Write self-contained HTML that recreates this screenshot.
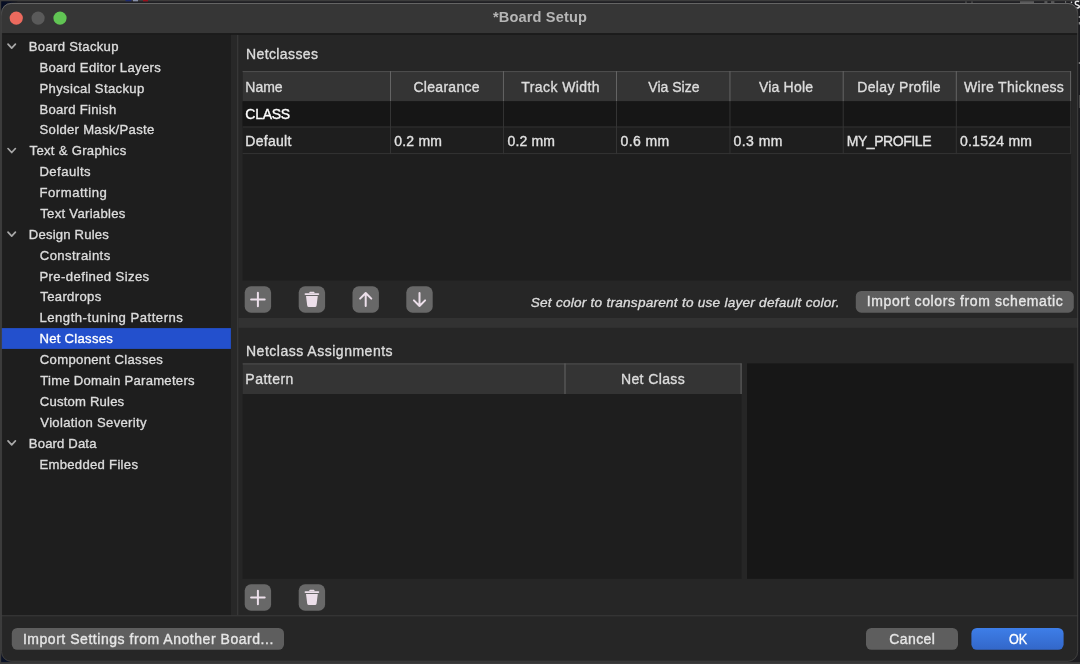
<!DOCTYPE html>
<html><head><meta charset="utf-8">
<title>Board Setup</title>
<style>
html,body{margin:0;padding:0;}
body{width:1080px;height:664px;overflow:hidden;background:#3c3c3c;position:relative;font-family:"Liberation Sans",sans-serif;font-size:14px;color:#dedede;}
.abs{position:absolute;}
#txt{left:0;top:0;width:1080px;height:664px;will-change:transform;}
.t{position:absolute;white-space:nowrap;line-height:20px;height:20px;-webkit-text-stroke:0.35px currentColor;}
</style></head><body>
<svg class="abs" style="left:0;top:0" width="1080" height="664" viewBox="0 0 1080 664">
<defs>
<clipPath id="wc"><rect x="1.1" y="3.0" width="1077.0" height="658.7" rx="10" ry="10"/></clipPath>
<linearGradient id="okg" x1="0" y1="0" x2="0" y2="1"><stop offset="0" stop-color="#3e7ee8"/><stop offset="1" stop-color="#3367c9"/></linearGradient>
<linearGradient id="bdg" gradientUnits="userSpaceOnUse" x1="0" y1="3" x2="0" y2="16"><stop offset="0" stop-color="#6e6e6e"/><stop offset="0.25" stop-color="#686868"/><stop offset="1" stop-color="#404040"/></linearGradient>
<linearGradient id="nv" x1="0" y1="0" x2="1" y2="0"><stop offset="0" stop-color="#050d24"/><stop offset="0.5" stop-color="#0a1024"/><stop offset="1" stop-color="#1c1c20"/></linearGradient>
</defs>
<rect x="0" y="0" width="1080" height="664" fill="#3c3c3c"/>
<rect x="1.3" y="1.4" width="1079" height="660.8" fill="#1c1c20"/>
<rect x="1.3" y="1.4" width="16" height="30" fill="url(#nv)"/>
<rect x="1.3" y="640" width="12" height="22" fill="#0a1228"/>
<rect x="125.5" y="0" width="6" height="1.3" fill="#1c2a70"/><rect x="133" y="0" width="5" height="1.3" fill="#8890a8"/><rect x="143" y="0" width="5" height="1.4" fill="#98101c"/>
<rect x="1020" y="1.4" width="14" height="1.4" fill="#6a6a6a"/>
<rect x="1044.4" y="1.4" width="3" height="1.3" fill="#707070"/>
<rect x="1051" y="1.4" width="3.4" height="1.3" fill="#707070"/>
<rect x="1065.2" y="1.2" width="0.9" height="1.6" fill="#8a8a8a"/>
<rect x="965" y="1.6" width="2" height="1" fill="#555"/><rect x="971" y="1.6" width="2" height="1" fill="#555"/>
<circle cx="1071.5" cy="2.3" r="0.8" fill="#ddd"/>
<path d="M1079.2 1.6 Q1075.2 0.6 1075.2 3 Q1075.2 4.6 1077.4 5 Q1079.6 5.5 1079.2 7.2 Q1078.6 8.4 1076.2 7.8" fill="none" stroke="#e8e8e8" stroke-width="1.5"/>
<rect x="1078.7" y="16" width="1.3" height="2" fill="#8a8a8a"/><rect x="1078.7" y="22" width="1.3" height="2.5" fill="#8a8a8a"/>
<rect x="1078.7" y="62" width="1.3" height="2" fill="#777"/><rect x="1078.9" y="95" width="1.1" height="13" fill="#4a4a4a"/>
<rect x="1.1" y="3.0" width="1077.0" height="658.7" rx="10" ry="10" fill="#262626"/>
<g clip-path="url(#wc)">
<rect x="0.00" y="0.00" width="1080.00" height="33.20" fill="#363636" />
<rect x="0.00" y="33.20" width="1080.00" height="1.70" fill="#1b1b1b" />
<circle cx="16.25" cy="18.1" r="6.6" fill="#ec6a5e"/>
<circle cx="38.1" cy="18.1" r="6.6" fill="#5a5a5a"/>
<circle cx="60.0" cy="18.1" r="6.6" fill="#61c454"/>
<rect x="0.00" y="34.90" width="230.90" height="580.40" fill="#1e1e1e" />
<rect x="230.90" y="34.90" width="6.20" height="580.40" fill="#282828" />
<rect x="237.10" y="34.90" width="1.20" height="580.40" fill="#3a3a3a" />
<rect x="0.00" y="328.10" width="230.90" height="20.80" fill="#2350cd" />
<path d="M8.0 44.10 L11.7 48.10 L15.4 44.10" fill="none" stroke="#a8a8a8" stroke-width="1.7" stroke-linecap="round" stroke-linejoin="round"/>
<path d="M8.0 148.53 L11.7 152.53 L15.4 148.53" fill="none" stroke="#a8a8a8" stroke-width="1.7" stroke-linecap="round" stroke-linejoin="round"/>
<path d="M8.0 232.06 L11.7 236.06 L15.4 232.06" fill="none" stroke="#a8a8a8" stroke-width="1.7" stroke-linecap="round" stroke-linejoin="round"/>
<path d="M8.0 440.92 L11.7 444.92 L15.4 440.92" fill="none" stroke="#a8a8a8" stroke-width="1.7" stroke-linecap="round" stroke-linejoin="round"/>
<rect x="242.60" y="71.10" width="828.50" height="209.50" fill="#1e1e1e" />
<rect x="242.60" y="71.10" width="828.50" height="30.20" fill="#343434" />
<rect x="242.60" y="71.10" width="828.50" height="1.00" fill="#505050" />
<rect x="242.60" y="101.30" width="828.50" height="26.20" fill="#161616" />
<rect x="242.60" y="126.50" width="828.50" height="1.00" fill="#343434" />
<rect x="242.60" y="153.10" width="828.50" height="1.00" fill="#343434" />
<rect x="390.00" y="71.10" width="1.00" height="30.20" fill="#646464" />
<rect x="390.00" y="101.30" width="1.00" height="52.80" fill="#343434" />
<rect x="502.95" y="71.10" width="1.00" height="30.20" fill="#646464" />
<rect x="502.95" y="101.30" width="1.00" height="52.80" fill="#343434" />
<rect x="616.00" y="71.10" width="1.00" height="30.20" fill="#646464" />
<rect x="616.00" y="101.30" width="1.00" height="52.80" fill="#343434" />
<rect x="729.45" y="71.10" width="1.00" height="30.20" fill="#646464" />
<rect x="729.45" y="101.30" width="1.00" height="52.80" fill="#343434" />
<rect x="842.70" y="71.10" width="1.00" height="30.20" fill="#646464" />
<rect x="842.70" y="101.30" width="1.00" height="52.80" fill="#343434" />
<rect x="955.80" y="71.10" width="1.00" height="30.20" fill="#646464" />
<rect x="955.80" y="101.30" width="1.00" height="52.80" fill="#343434" />
<rect x="1070.10" y="71.10" width="1.00" height="30.20" fill="#646464" />
<rect x="1070.10" y="101.30" width="1.00" height="52.80" fill="#343434" />
<rect x="244.70" y="286.30" width="26.40" height="26.40" fill="#686868" rx="6.3" ry="6.3" />
<rect x="298.70" y="286.30" width="26.40" height="26.40" fill="#686868" rx="6.3" ry="6.3" />
<rect x="352.50" y="286.30" width="26.40" height="26.40" fill="#686868" rx="6.3" ry="6.3" />
<rect x="406.30" y="286.30" width="26.40" height="26.40" fill="#686868" rx="6.3" ry="6.3" />
<path d="M251.09999999999997 299.5H264.7M257.9 292.7V306.3" stroke="#ecdfea" stroke-width="2" stroke-linecap="round" fill="none"/>
<path d="M305.5 294.1H318.29999999999995" stroke="#ecdfea" stroke-width="1.9" stroke-linecap="round" fill="none"/><path d="M309.29999999999995 293.3V292.5Q309.29999999999995 291.7 310.09999999999997 291.7H313.7Q314.5 291.7 314.5 292.5V293.3Z" fill="#ecdfea"/><path d="M306.0 296.1H317.79999999999995L316.59999999999997 305.4Q316.45 307.0 314.9 307.0H308.9Q307.34999999999997 307.0 307.2 305.4Z" fill="#ecdfea"/>
<path d="M365.7 306.1V293.1M360.09999999999997 298.6L365.7 293.0L371.3 298.6" stroke="#ecdfea" stroke-width="2" stroke-linecap="round" stroke-linejoin="round" fill="none"/>
<path d="M419.5 292.9V305.9M413.9 300.4L419.5 306.0L425.1 300.4" stroke="#ecdfea" stroke-width="2" stroke-linecap="round" stroke-linejoin="round" fill="none"/>
<rect x="855.80" y="291.00" width="218.00" height="21.70" fill="#5e5e5e" rx="5.5" ry="5.5" />
<rect x="238.30" y="318.00" width="841.70" height="9.80" fill="#323232" />
<rect x="242.60" y="363.40" width="499.00" height="215.40" fill="#1e1e1e" />
<rect x="242.60" y="363.40" width="499.00" height="30.60" fill="#343434" />
<rect x="242.60" y="363.40" width="499.00" height="1.00" fill="#505050" />
<rect x="564.50" y="363.40" width="1.00" height="30.60" fill="#646464" />
<rect x="740.60" y="363.40" width="1.00" height="30.60" fill="#646464" />
<rect x="747.00" y="363.40" width="326.60" height="215.40" fill="#171717" />
<rect x="244.70" y="584.30" width="26.40" height="26.40" fill="#686868" rx="6.3" ry="6.3" />
<rect x="298.70" y="584.30" width="26.40" height="26.40" fill="#686868" rx="6.3" ry="6.3" />
<path d="M251.09999999999997 597.5H264.7M257.9 590.7V604.3" stroke="#ecdfea" stroke-width="2" stroke-linecap="round" fill="none"/>
<path d="M305.5 592.1H318.29999999999995" stroke="#ecdfea" stroke-width="1.9" stroke-linecap="round" fill="none"/><path d="M309.29999999999995 591.3V590.5Q309.29999999999995 589.7 310.09999999999997 589.7H313.7Q314.5 589.7 314.5 590.5V591.3Z" fill="#ecdfea"/><path d="M306.0 594.1H317.79999999999995L316.59999999999997 603.4Q316.45 605.0 314.9 605.0H308.9Q307.34999999999997 605.0 307.2 603.4Z" fill="#ecdfea"/>
<rect x="0.00" y="615.30" width="1080.00" height="1.00" fill="#3b3b3b" />
<rect x="11.80" y="628.00" width="272.20" height="21.80" fill="#5e5e5e" rx="5.5" ry="5.5" />
<rect x="866.00" y="628.00" width="92.00" height="21.80" fill="#5e5e5e" rx="5.5" ry="5.5" />
<rect x="971.40" y="628.00" width="92.20" height="21.80" fill="url(#okg)" rx="5.5" ry="5.5" />
</g>
<rect x="1.55" y="3.45" width="1076.1" height="657.8000000000001" rx="9.6" ry="9.6" fill="none" stroke="url(#bdg)" stroke-width="0.9"/>
</svg>
<div class="abs" id="txt">
<span class="t" id="s0" style="left:28.81px;top:37.00px;font-size:13.1px;letter-spacing:0.317px;color:#dcdcdc;">Board Stackup</span>
<span class="t" id="s1" style="left:39.45px;top:58.00px;font-size:13.1px;letter-spacing:0.308px;color:#dcdcdc;">Board Editor Layers</span>
<span class="t" id="s2" style="left:39.45px;top:79.00px;font-size:13.1px;letter-spacing:0.337px;color:#dcdcdc;">Physical Stackup</span>
<span class="t" id="s3" style="left:39.45px;top:100.00px;font-size:13.1px;letter-spacing:0.295px;color:#dcdcdc;">Board Finish</span>
<span class="t" id="s4" style="left:39.59px;top:120.00px;font-size:13.1px;letter-spacing:0.296px;color:#dcdcdc;">Solder Mask/Paste</span>
<span class="t" id="s5" style="left:29.60px;top:141.00px;font-size:13.1px;letter-spacing:0.301px;color:#dcdcdc;">Text &amp; Graphics</span>
<span class="t" id="s6" style="left:39.45px;top:162.00px;font-size:13.1px;letter-spacing:0.456px;color:#dcdcdc;">Defaults</span>
<span class="t" id="s7" style="left:39.45px;top:183.00px;font-size:13.1px;letter-spacing:0.535px;color:#dcdcdc;">Formatting</span>
<span class="t" id="s8" style="left:40.27px;top:204.00px;font-size:13.1px;letter-spacing:0.289px;color:#dcdcdc;">Text Variables</span>
<span class="t" id="s9" style="left:28.81px;top:225.00px;font-size:13.1px;letter-spacing:0.198px;color:#dcdcdc;">Design Rules</span>
<span class="t" id="s10" style="left:39.81px;top:246.00px;font-size:13.1px;letter-spacing:0.420px;color:#dcdcdc;">Constraints</span>
<span class="t" id="s11" style="left:39.45px;top:267.00px;font-size:13.1px;letter-spacing:0.399px;color:#dcdcdc;">Pre-defined Sizes</span>
<span class="t" id="s12" style="left:40.27px;top:287.00px;font-size:13.1px;letter-spacing:0.336px;color:#dcdcdc;">Teardrops</span>
<span class="t" id="s13" style="left:39.45px;top:308.00px;font-size:13.1px;letter-spacing:0.522px;color:#dcdcdc;">Length-tuning Patterns</span>
<span class="t" id="s14" style="left:39.45px;top:329.00px;font-size:13.1px;letter-spacing:0.279px;color:#fff;">Net Classes</span>
<span class="t" id="s15" style="left:39.81px;top:350.00px;font-size:13.1px;letter-spacing:0.326px;color:#dcdcdc;">Component Classes</span>
<span class="t" id="s16" style="left:40.27px;top:371.00px;font-size:13.1px;letter-spacing:0.267px;color:#dcdcdc;">Time Domain Parameters</span>
<span class="t" id="s17" style="left:39.81px;top:392.00px;font-size:13.1px;letter-spacing:0.195px;color:#dcdcdc;">Custom Rules</span>
<span class="t" id="s18" style="left:40.36px;top:413.00px;font-size:13.1px;letter-spacing:0.303px;color:#dcdcdc;">Violation Severity</span>
<span class="t" id="s19" style="left:28.81px;top:434.00px;font-size:13.1px;letter-spacing:0.157px;color:#dcdcdc;">Board Data</span>
<span class="t" id="s20" style="left:39.45px;top:455.00px;font-size:13.1px;letter-spacing:0.298px;color:#dcdcdc;">Embedded Files</span>
<span class="t" id="title" style="left:492.94px;top:7.00px;font-size:14.6px;letter-spacing:0.139px;font-weight:bold;color:#b6b6b6;-webkit-text-stroke:0;">*Board Setup</span>
<span class="t" id="l1" style="left:246.01px;top:44.00px;font-size:14px;letter-spacing:0.389px;color:#dcdcdc;">Netclasses</span>
<span class="t" id="h0" style="left:245.32px;top:77.00px;font-size:14px;letter-spacing:-0.024px;color:#dcdcdc;">Name</span>
<span class="t" id="h1" style="left:413.41px;top:77.00px;font-size:14px;letter-spacing:0.298px;color:#dcdcdc;">Clearance</span>
<span class="t" id="h2" style="left:521.21px;top:77.00px;font-size:14px;letter-spacing:0.428px;color:#dcdcdc;">Track Width</span>
<span class="t" id="h3" style="left:648.30px;top:77.00px;font-size:14px;letter-spacing:0.009px;color:#dcdcdc;">Via Size</span>
<span class="t" id="h4" style="left:758.92px;top:77.00px;font-size:14px;letter-spacing:0.204px;color:#dcdcdc;">Via Hole</span>
<span class="t" id="h5" style="left:857.32px;top:77.00px;font-size:14px;letter-spacing:0.328px;color:#dcdcdc;">Delay Profile</span>
<span class="t" id="h6" style="left:963.94px;top:77.00px;font-size:14px;letter-spacing:0.345px;color:#dcdcdc;">Wire Thickness</span>
<span class="t" id="c0" style="left:245.31px;top:104.00px;font-size:14px;letter-spacing:-0.279px;color:#fff;">CLASS</span>
<span class="t" id="d0" style="left:245.35px;top:131.00px;font-size:14px;letter-spacing:0.265px;color:#e2e2e2;">Default</span>
<span class="t" id="d1" style="left:394.26px;top:131.00px;font-size:14px;letter-spacing:0.220px;color:#e2e2e2;">0.2 mm</span>
<span class="t" id="d2" style="left:507.44px;top:131.00px;font-size:14px;letter-spacing:0.184px;color:#e2e2e2;">0.2 mm</span>
<span class="t" id="d3" style="left:620.44px;top:131.00px;font-size:14px;letter-spacing:0.434px;color:#e2e2e2;">0.6 mm</span>
<span class="t" id="d4" style="left:733.41px;top:131.00px;font-size:14px;letter-spacing:0.486px;color:#e2e2e2;">0.3 mm</span>
<span class="t" id="d5" style="left:846.65px;top:131.00px;font-size:14px;letter-spacing:-0.424px;color:#e2e2e2;">MY_PROFILE</span>
<span class="t" id="d6" style="left:959.90px;top:131.00px;font-size:14px;letter-spacing:0.264px;color:#e2e2e2;">0.1524 mm</span>
<span class="t" id="hint" style="left:530.76px;top:293.00px;font-size:13.6px;letter-spacing:0.243px;font-style:italic;color:#dcdcdc;">Set color to transparent to use layer default color.</span>
<span class="t" id="impc" style="left:866.84px;top:291.00px;font-size:14px;letter-spacing:0.598px;color:#e6e6e6;">Import colors from schematic</span>
<span class="t" id="l2" style="left:246.01px;top:341.00px;font-size:14px;letter-spacing:0.508px;color:#dcdcdc;">Netclass Assignments</span>
<span class="t" id="p0" style="left:245.32px;top:369.00px;font-size:14px;letter-spacing:0.491px;color:#dcdcdc;">Pattern</span>
<span class="t" id="p1" style="left:620.94px;top:369.00px;font-size:14px;letter-spacing:0.382px;color:#dcdcdc;">Net Class</span>
<span class="t" id="imps" style="left:22.89px;top:629.00px;font-size:14px;letter-spacing:0.537px;color:#e6e6e6;">Import Settings from Another Board...</span>
<span class="t" id="cancel" style="left:889.19px;top:629.00px;font-size:14px;letter-spacing:0.425px;color:#e6e6e6;">Cancel</span>
<span class="t" id="ok" style="left:1008.84px;top:629.00px;font-size:14px;letter-spacing:-0.144px;color:#fff;transform:scaleX(0.9);transform-origin:0 0;">OK</span>
</div>
</body></html>
